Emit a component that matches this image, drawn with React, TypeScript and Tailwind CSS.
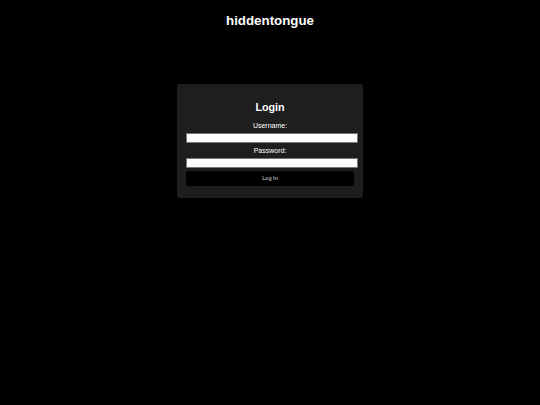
export default function App() {
  return (
    <div className="min-h-[405px] w-full bg-black font-['Liberation_Sans',Arial,sans-serif] text-white">
      <h1 className="pt-[12px] text-center text-[13.3px] font-bold leading-[18px]">hiddentongue</h1>
      <div className="mx-auto mt-[54px] w-[186px] rounded-[3px] bg-[#1e1e1e] px-[9px] pt-[16px] pb-[12px]">
        <h2 className="text-center text-[10.7px] font-bold leading-[14px]">Login</h2>
        <form className="mt-[7px] flex flex-col" onSubmit={(e) => e.preventDefault()}>
          <label className="text-center text-[7px] leading-[9px]">Username:</label>
          <input
            type="text"
            className="mt-[3px] h-[10px] w-[172px] border border-[#777] bg-white"
          />
          <label className="mt-[3px] text-center text-[7px] leading-[9px]">Password:</label>
          <input
            type="password"
            className="mt-[3px] h-[10px] w-[172px] border border-[#777] bg-white"
          />
          <button
            type="submit"
            className="mt-[3px] h-[15px] w-full rounded-[2px] bg-black text-[5.6px] leading-[15px] text-[#ddd]"
          >
            Log In
          </button>
        </form>
      </div>
    </div>
  );
}
